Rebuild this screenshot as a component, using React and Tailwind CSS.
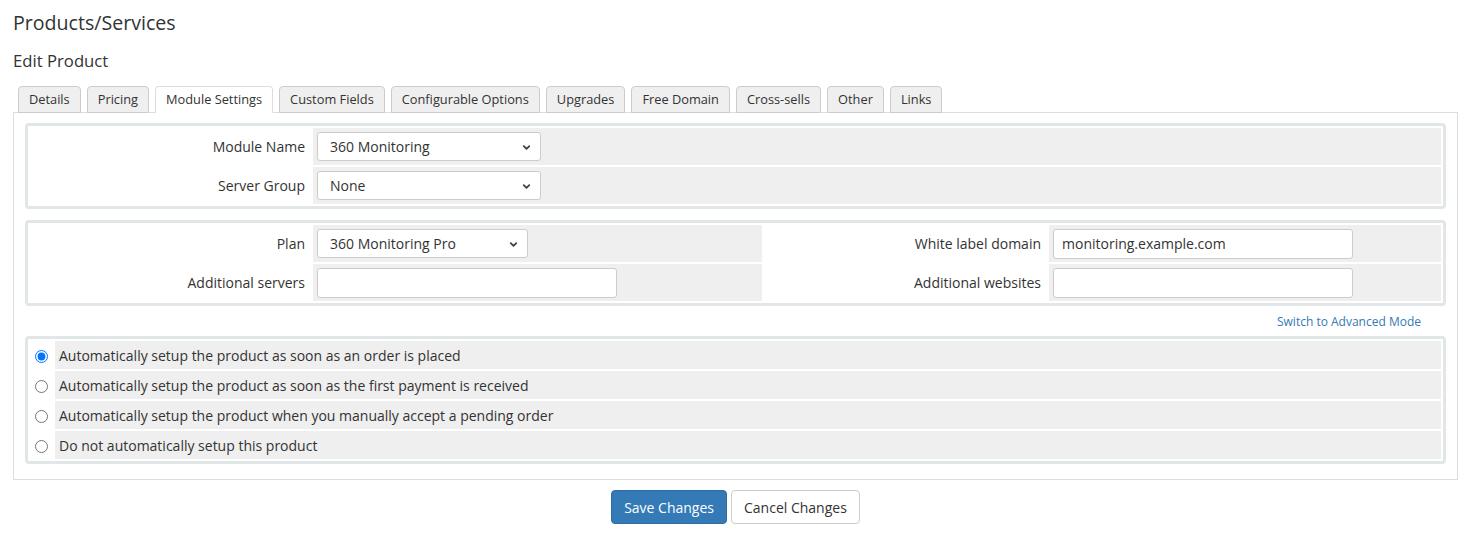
import { ChevronDown } from "lucide-react";

const tabs = [
  "Details",
  "Pricing",
  "Module Settings",
  "Custom Fields",
  "Configurable Options",
  "Upgrades",
  "Free Domain",
  "Cross-sells",
  "Other",
  "Links",
];

const radios = [
  "Automatically setup the product as soon as an order is placed",
  "Automatically setup the product as soon as the first payment is received",
  "Automatically setup the product when you manually accept a pending order",
  "Do not automatically setup this product",
];

function Select({ value, width }) {
  return (
    <div className={`relative ${width}`}>
      <select
        defaultValue={value}
        className="h-[29px] w-full appearance-none rounded-[3px] border border-[#ccc] bg-white pl-3 pr-8 text-[14px] text-[#333] outline-none"
      >
        <option>{value}</option>
      </select>
      <ChevronDown className="pointer-events-none absolute right-[9px] top-[10px] h-[11px] w-[11px] text-[#444]" strokeWidth={4} />
    </div>
  );
}

function Input({ value = "" }) {
  return (
    <input
      type="text"
      defaultValue={value}
      className="h-[30px] w-[300px] rounded-[3px] border border-[#ccc] bg-white px-2 text-[14px] text-[#333] outline-none"
    />
  );
}

function Label({ children, className = "" }) {
  return <td className={`h-[37px] bg-white pr-[6px] text-right align-middle text-[14px] text-[#333] ${className}`}>{children}</td>;
}

function Field({ children, className = "" }) {
  return <td className={`h-[37px] bg-[#efefef] px-[4px] align-middle ${className}`}>{children}</td>;
}

function Box({ children }) {
  return (
    <div className="rounded-[4px] border-[3px] border-[#e1e6e9] bg-white">
      <table className="w-full border-separate border-spacing-[2px]">
        <tbody>{children}</tbody>
      </table>
    </div>
  );
}

export default function App() {
  return (
    <div className="min-h-[540px] bg-white px-[13px] pt-[9px] text-[#333]" style={{ fontFamily: '"Open Sans", sans-serif' }}>
      <h1 className="text-[19.6px] leading-[28px] text-[#333]">Products/Services</h1>
      <h2 className="mt-[13px] text-[16.7px] leading-[22px] text-[#333]">Edit Product</h2>

      <div className="mt-[14px] flex gap-[6px] pl-[5px]">
        {tabs.map((t) => {
          const active = t === "Module Settings";
          return (
            <div
              key={t}
              className={`relative -mb-px rounded-t-[4px] border px-[10px] pb-[4px] pt-[4px] text-[12.8px] leading-[17px] ${
                active ? "z-10 border-[#ddd] border-b-white bg-white text-[#333]" : "border-[#ccc] bg-[#efefef] text-[#333]"
              }`}
            >
              {t}
            </div>
          );
        })}
      </div>

      <div className="border border-[#ddd] px-[11px] pb-[15px] pt-[10px]">
        <Box>
          <tr>
            <Label className="w-[281px]">Module Name</Label>
            <Field>
              <Select value="360 Monitoring" width="w-[224px]" />
            </Field>
          </tr>
          <tr>
            <Label>Server Group</Label>
            <Field>
              <Select value="None" width="w-[224px]" />
            </Field>
          </tr>
        </Box>

        <div className="mt-[11px]">
          <Box>
            <tr>
              <Label className="w-[281px]">Plan</Label>
              <Field className="w-[449px]">
                <Select value="360 Monitoring Pro" width="w-[211px]" />
              </Field>
              <Label className="w-[283px]">White label domain</Label>
              <Field>
                <Input value="monitoring.example.com" />
              </Field>
            </tr>
            <tr>
              <Label>Additional servers</Label>
              <Field>
                <Input />
              </Field>
              <Label>Additional websites</Label>
              <Field>
                <Input />
              </Field>
            </tr>
          </Box>
        </div>

        <div className="flex justify-end pr-[25px] pt-[8px] pb-[6px]">
          <a href="#" className="text-[12px] leading-[16px] text-[#337ab7]">
            Switch to Advanced Mode
          </a>
        </div>

        <Box>
          {radios.map((r, i) => (
            <tr key={r}>
              <td className="h-[28px] w-[23px] bg-white text-center align-middle">
                <input type="radio" name="autosetup" defaultChecked={i === 0} className="m-0 h-[13px] w-[13px] align-middle" />
              </td>
              <td className="h-[28px] bg-[#efefef] pl-[4px] align-middle text-[14px] text-[#333]">{r}</td>
            </tr>
          ))}
        </Box>
      </div>

      <div className="mt-[10px] flex justify-center gap-[4px]">
        <button className="h-[34px] rounded-[4px] border border-[#2e6da4] bg-[#337ab7] px-[12px] text-[14px] text-white">Save Changes</button>
        <button className="h-[34px] rounded-[4px] border border-[#ccc] bg-white px-[12px] text-[14px] text-[#333]">Cancel Changes</button>
      </div>
    </div>
  );
}
